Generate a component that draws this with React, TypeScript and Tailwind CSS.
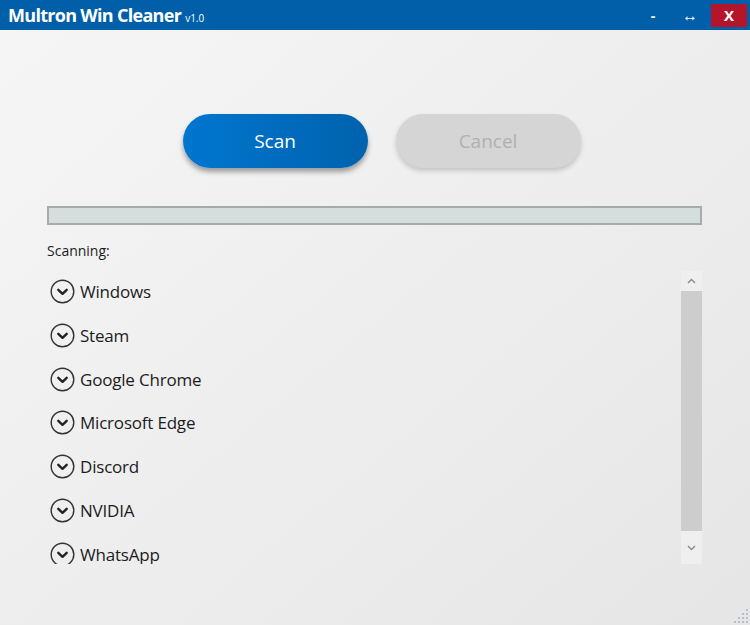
import React from 'react';

const items = ['Windows', 'Steam', 'Google Chrome', 'Microsoft Edge', 'Discord', 'NVIDIA', 'WhatsApp'];

function ExpandIcon() {
  return (
    <svg width="25" height="25" viewBox="0 0 25 25" className="shrink-0">
      <circle cx="12.5" cy="12.5" r="11.3" fill="none" stroke="#333" strokeWidth="1.4" />
      <path d="M8.3 10.8 L12.5 14.8 L16.7 10.8" fill="none" stroke="#222" strokeWidth="2.4" strokeLinecap="round" strokeLinejoin="round" />
    </svg>
  );
}

function Grip() {
  const dots = [
    [12, 0], [12, 4], [8, 4], [12, 8], [8, 8], [4, 8], [12, 12], [8, 12], [4, 12], [0, 12],
  ];
  return (
    <svg width="14" height="14" viewBox="0 0 14 14">
      {dots.map(([x, y], i) => (
        <rect key={i} x={x} y={y} width="2" height="2" fill="#b8bccb" />
      ))}
    </svg>
  );
}

export default function App() {
  return (
    <div
      className="w-[750px] h-[625px] flex flex-col overflow-hidden bg-gradient-to-br from-[#f6f6f6] to-[#e6e6e6] text-[#1c1c1c]"
      style={{ fontFamily: '"Open Sans", "Noto Sans", sans-serif' }}
    >
      {/* title bar */}
      <div className="h-[30px] bg-[#005fa8] flex items-center pl-[8px] pr-[3px] shrink-0">
        <div className="flex items-baseline gap-[4px] text-white">
          <span className="text-[18px] font-bold tracking-[-0.7px]">Multron Win Cleaner</span>
          <span className="text-[10px] text-white">v1.0</span>
        </div>
        <div className="ml-auto flex items-center h-full">
          <span className="text-white font-bold text-[14px] w-[20px] text-center mr-[17px]">-</span>
          <span className="text-white text-[16px] w-[20px] text-center mr-[11px] leading-none">↔</span>
          <div className="w-[36px] h-[23px] bg-[#b5152b] flex items-center justify-center text-white font-bold text-[15px]">
            X
          </div>
        </div>
      </div>

      {/* buttons */}
      <div className="flex justify-center gap-[28px] pt-[84px] pl-[13px]">
        <button className="w-[185px] h-[54px] rounded-full bg-gradient-to-r from-[#0076d0] to-[#0062ad] text-white text-[19px] shadow-[0_4px_5px_rgba(0,0,0,0.35)]">
          Scan
        </button>
        <button className="w-[185px] h-[54px] rounded-full bg-[#d5d5d5] text-[#b0b0b0] text-[19px] shadow-[0_3px_5px_rgba(0,0,0,0.18)]">
          Cancel
        </button>
      </div>

      {/* progress */}
      <div className="mx-[47px] mt-[38px] w-[655px] h-[19px] bg-[#d6dddd] border-2 border-[#a8abab]" />

      <div className="ml-[47px] mt-[15px] text-[14px]">Scanning:</div>

      {/* list */}
      <div className="flex ml-[50px] mt-[10px] w-[652px] h-[293px]">
        <div className="flex-1 overflow-hidden flex flex-col gap-[18.8px] pt-[8px]">
          {items.map((name) => (
            <div key={name} className="flex items-center gap-[5px] h-[25px] shrink-0">
              <ExpandIcon />
              <span className="text-[17px] tracking-[-0.2px] leading-none">{name}</span>
            </div>
          ))}
        </div>
        <div className="w-[21px] flex flex-col bg-[#efefef]">
          <div className="h-[20px] flex items-center justify-center">
            <svg width="9" height="6" viewBox="0 0 9 6">
              <path d="M1 5 L4.5 1.5 L8 5" fill="none" stroke="#8a8a8a" strokeWidth="1.4" />
            </svg>
          </div>
          <div className="flex-1 bg-[#cdcdcd]" />
          <div className="h-[33px] flex items-center justify-center">
            <svg width="9" height="6" viewBox="0 0 9 6">
              <path d="M1 1 L4.5 4.5 L8 1" fill="none" stroke="#8a8a8a" strokeWidth="1.4" />
            </svg>
          </div>
        </div>
      </div>

      <div className="mt-auto self-end mr-[2px] mb-[2px]">
        <Grip />
      </div>
    </div>
  );
}
